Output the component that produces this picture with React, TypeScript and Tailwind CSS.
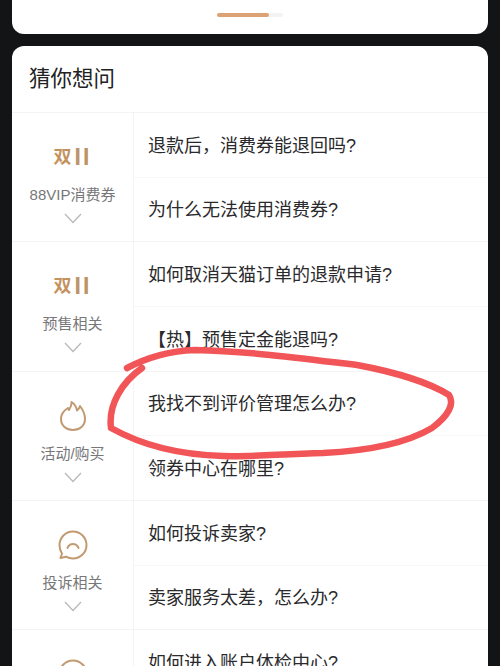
import React from 'react';

const fontCls = "font-['Liberation_Sans','Noto_Sans_CJK_SC',sans-serif]";

const Logo11 = () => (
    <div className="h-[26px] flex items-center justify-center gap-[3px] leading-none font-bold text-[#c4925f]">
        <span className="text-[18px]">双</span>
        <span className="text-[23px] tracking-[2px] text-[#bd9468]">II</span>
    </div>
);

const FlameIcon = () => (
    <svg width="28" height="30" viewBox="0 0 28 30" fill="none" stroke="#c29a72" strokeWidth="2" strokeLinecap="round" strokeLinejoin="round">
        <path d="M9 7C5 9.500 2 13 2 18c0 6.500 5.300 11 12 11s12-4.500 12-11c0-5-2-9-5-13-.5 2-1.300 3.500-3 4.500C17.500 6 15.500 3 12.500 1c.5 3-1 5.500-2.500 8z" />
    </svg>
);

const ChatIcon = () => (
    <svg width="30" height="30" viewBox="0 0 30 30" fill="none" stroke="#c29a72" strokeWidth="2" strokeLinecap="round" strokeLinejoin="round">
        <path d="M15 1.500c7.500 0 13.500 6 13.500 13.500S22.500 28.500 15 28.500c-2.500 0-5-.6-7-1.800L2.500 28 4 23.500C2.300 21 1.500 18 1.500 15 1.500 7.500 7.500 1.500 15 1.500z" />
        <path d="M9.500 18c1-2.500 3-4 5.500-4s4.500 1.500 5.500 4" />
    </svg>
);

const Chevron = () => (
    <svg width="18" height="11" viewBox="0 0 18 11" fill="none" stroke="#b9b9bb" strokeWidth="1.300">
        <path d="M1 1l8 8.500L17 1" />
    </svg>
);

const groups = [
    { icon: <Logo11 />, label: '88VIP消费券', rows: ['退款后\uFF0C消费券能退回吗?', '为什么无法使用消费券?'] },
    { icon: <Logo11 />, label: '预售相关', rows: ['如何取消天猫订单的退款申请?', '【热】预售定金能退吗?'] },
    { icon: <FlameIcon />, label: '活动/购买', rows: ['我找不到评价管理怎么办?', '领券中心在哪里?'] },
    { icon: <ChatIcon />, label: '投诉相关', rows: ['如何投诉卖家?', '卖家服务太差\uFF0C怎么办?'] },
];

export default function App() {
    return (
        <div className={`relative w-[500px] h-[666px] overflow-hidden bg-[#131416] px-3 ${fontCls}`}>
            <div className="h-[34px] bg-white rounded-b-[12px] flex justify-center pt-[13px]">
                <div className="w-[66px] h-[4px] bg-[#f3f3f3] rounded-full">
                    <div className="w-[52px] h-[4px] bg-[#dca274] rounded-full" />
                </div>
            </div>

            <div className="mt-3 bg-white rounded-[12px]">
                <div className="h-[66px] flex items-center pl-[17px] text-[21.500px] text-[#222]">猜你想问</div>
                {groups.map((g) => (
                    <div key={g.label} className="flex h-[129.300px] border-t border-[#f4f4f4]">
                        <div className="w-[122px] shrink-0 flex flex-col items-center pt-[29px] border-r border-[#f4f4f4]">
                            <div className="h-[30px] flex items-center justify-center">{g.icon}</div>
                            <div className="mt-[12px] text-[15px] leading-[22px] text-[#77777a]">{g.label}</div>
                            <div className="mt-[7px]"><Chevron /></div>
                        </div>
                        <div className="flex-1 flex flex-col">
                            {g.rows.map((r, i) => (
                                <div key={r} className={`flex-1 flex items-center pl-[14px] pt-[3px] text-[18px] text-[#2a2a2c] ${i ? 'border-t border-[#f7f7f7]' : ''}`}>
                                    {r}
                                </div>
                            ))}
                        </div>
                    </div>
                ))}
                {/* last group runs past the bottom of the screen */}
                <div className="flex h-[60px] border-t border-[#f4f4f4]">
                    <div className="w-[122px] shrink-0 flex justify-center pt-[29px] border-r border-[#f4f4f4]">
                        <ChatIcon />
                    </div>
                    <div className="flex-1 pl-[14px] pt-[21px] text-[18px] leading-[24px] text-[#2a2a2c]">如何进入账户体检中心?</div>
                </div>
            </div>

            {/* red marker circle drawn over the list */}
            <svg className="absolute left-0 top-0 pointer-events-none" width="500" height="666" viewBox="0 0 500 666" fill="none">
                <path
                    d="M127 368C148 357 168 351 195 350C245 351 300 358 357 365C395 372 430 383 449 395C455 404 448 416 432 428C405 444 365 451 323 453C280 454 250 457 223 456C185 455 145 447 111 428C108 405 122 382 142 368"
                    stroke="#f25557"
                    strokeWidth="6.500"
                    strokeLinecap="round"
                    strokeLinejoin="round"
                />
            </svg>
        </div>
    );
}
